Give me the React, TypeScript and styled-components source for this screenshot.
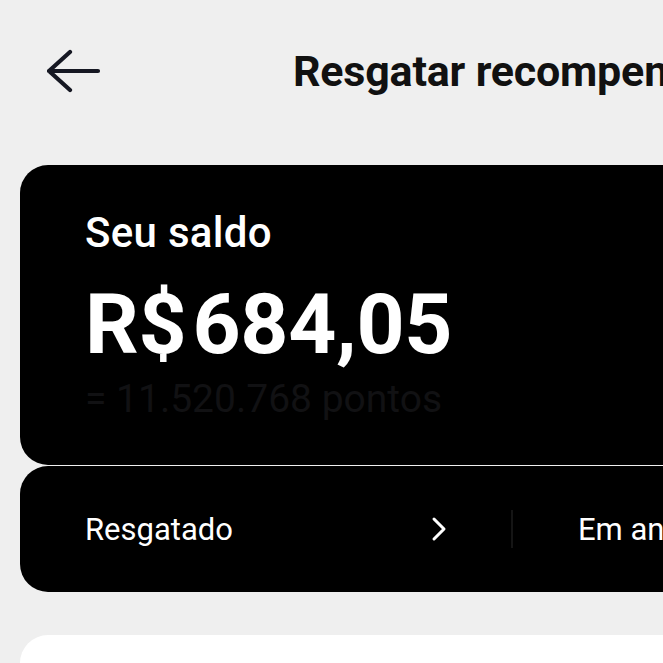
import React, { FC } from 'react';
import styled, { createGlobalStyle } from 'styled-components';

const GlobalStyle = createGlobalStyle`
    html, body {
        margin: 0;
        padding: 0;
        background: #efefef;
        overflow: hidden;
    }
    body {
        font-family: Roboto, "Liberation Sans", Arial, sans-serif;
        color: #161823;
    }
`;

const Page = styled.div`
    width: 960px;
    display: flex;
    flex-direction: column;
`;

const Header = styled.header`
    display: flex;
    align-items: center;
    height: 142px;
    padding: 0 0 0 47px;
`;

const BackButton = styled.button`
    display: flex;
    align-items: center;
    justify-content: center;
    width: 54px;
    height: 46px;
    padding: 0;
    border: none;
    background: transparent;
    cursor: pointer;
`;

const Title = styled.h1`
    margin: 0 0 0 192px;
    font-size: 43px;
    font-weight: 700;
    letter-spacing: -0.2px;
    white-space: nowrap;
    color: #111;
`;

const Cards = styled.div`
    display: flex;
    flex-direction: column;
    padding: 23px 20px 0;
`;

const BalanceCard = styled.section`
    display: flex;
    flex-direction: column;
    height: 300px;
    box-sizing: border-box;
    padding: 43px 65px 0;
    background: #000;
    border-radius: 28px;
    color: #fff;
`;

const Label = styled.div`
    font-size: 42px;
    font-weight: 500;
    line-height: 50px;
    letter-spacing: 0.3px;
`;

const Amount = styled.div`
    display: flex;
    margin-top: 22px;
    font-size: 84px;
    font-weight: 700;
    line-height: 90px;
    letter-spacing: -0.3px;
`;

const Currency = styled.span`
    margin-right: 6px;
`;

const Points = styled.div`
    margin-top: 7px;
    font-size: 39px;
    font-weight: 400;
    line-height: 44px;
    color: #111113;
`;

const StatsCard = styled.section`
    display: flex;
    align-items: center;
    height: 126px;
    margin-top: 1px;
    background: #000;
    border-radius: 28px;
    color: #fff;
`;

const StatItem = styled.div`
    display: flex;
    align-items: center;
    justify-content: space-between;
    flex-shrink: 0;
    width: 362px;
    padding: 0 64px 0 65px;
    font-size: 31px;
    font-weight: 400;
    white-space: nowrap;
`;

const Divider = styled.div`
    flex-shrink: 0;
    width: 2px;
    height: 38px;
    background: #151515;
`;

const WhiteCard = styled.section`
    height: 200px;
    margin-top: 43px;
    background: #fff;
    border-radius: 28px;
`;

const ArrowLeft: FC = () => (
    <svg width="54" height="44" viewBox="0 0 54 44" fill="none">
        <path d="M23 3 L2 22 L23 41 M2 22 H51" stroke="#161823" strokeWidth="4.2" strokeLinecap="round" strokeLinejoin="round" />
    </svg>
);

const Chevron: FC = () => (
    <svg width="16" height="26" viewBox="0 0 16 26" fill="none">
        <path d="M3 3 L13 13 L3 23" stroke="#fff" strokeWidth="3" strokeLinecap="round" strokeLinejoin="round" />
    </svg>
);

const App: FC = () => {
    return (
        <>
            <GlobalStyle />
            <Page>
                <Header>
                    <BackButton aria-label="Voltar">
                        <ArrowLeft />
                    </BackButton>
                    <Title>Resgatar recompensas</Title>
                </Header>
                <Cards>
                    <BalanceCard>
                        <Label>Seu saldo</Label>
                        <Amount>
                            <Currency>R$</Currency>684,05
                        </Amount>
                        <Points>= 11.520.768 pontos</Points>
                    </BalanceCard>
                    <StatsCard>
                        <StatItem>
                            <span>Resgatado</span>
                            <Chevron />
                        </StatItem>
                        <Divider />
                        <StatItem>
                            <span>Em análise</span>
                            <Chevron />
                        </StatItem>
                    </StatsCard>
                    <WhiteCard />
                </Cards>
            </Page>
        </>
    );
};

export default App;
